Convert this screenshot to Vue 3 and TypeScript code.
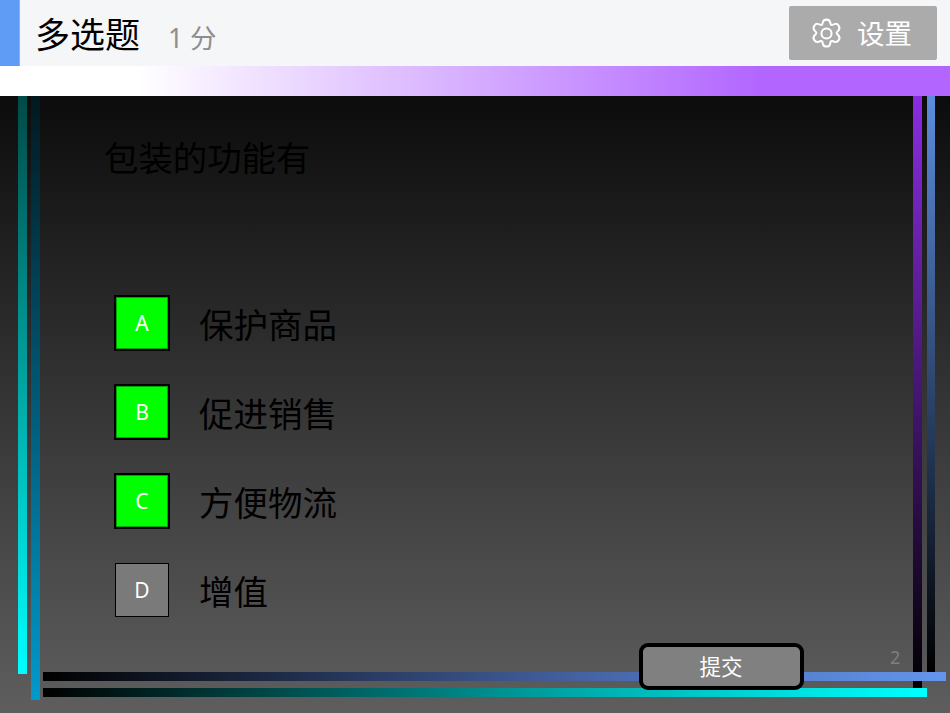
<script setup lang="ts">
interface Option { key: string; text: string; selected: boolean }
const options: Option[] = [
  { key: 'A', text: '保护商品', selected: true },
  { key: 'B', text: '促进销售', selected: true },
  { key: 'C', text: '方便物流', selected: true },
  { key: 'D', text: '增值', selected: false },
]
</script>

<template>
  <div class="page">
    <header class="header">
      <div class="accent"></div>
      <h1 class="title">多选题</h1>
      <span class="score">1 分</span>
      <button class="settings">
        <svg class="gear" viewBox="0 0 24 24" fill="none" stroke="currentColor" stroke-width="1.3" stroke-linecap="round" stroke-linejoin="round">
          <path d="M12 1.600c1.100 0 2 .4 2.300 1.500l.4 1.400c.1.400.6.600 1 .5l1.500-.5c1.100-.4 2.100.1 2.700 1.100.6 1 .7 2.100-.1 3l-1 1.100c-.3.300-.3.800 0 1.100l1 1.100c.8.900.8 2.100.1 3-.6 1-1.600 1.400-2.700 1.100l-1.500-.5c-.4-.1-.9.100-1 .5l-.4 1.500c-.3 1.100-1.200 1.600-2.300 1.600s-2-.5-2.300-1.600l-.4-1.500c-.1-.4-.6-.6-1-.5l-1.500.5c-1.100.3-2.100-.1-2.700-1.100-.7-.9-.7-2.100.1-3l1-1.100c.3-.3.3-.8 0-1.100l-1-1.100c-.8-.9-.7-2-.1-3 .6-1 1.600-1.500 2.700-1.100l1.500.5c.4.100.9-.1 1-.5l.4-1.400c.3-1.100 1.200-1.500 2.300-1.500z" transform="translate(0 1.400)"/>
          <circle cx="12" cy="12" r="3.300"/>
        </svg>
        <span class="settings-text">设置</span>
      </button>
    </header>
    <div class="ribbon"></div>
    <main class="stage">
      <i class="bar left-a"></i>
      <i class="bar left-b"></i>
      <i class="bar right-a"></i>
      <i class="bar right-b"></i>
      <i class="bar bottom-a"></i>
      <i class="bar bottom-b"></i>

      <h2 class="question">包装的功能有</h2>
      <ul class="options">
        <li v-for="o in options" :key="o.key" class="option">
          <span class="slot">
            <span class="letter" :class="{ on: o.selected }">{{ o.key }}</span>
          </span>
          <span class="label">{{ o.text }}</span>
        </li>
      </ul>
      <span class="page-no">2</span>
      <button class="submit">提交</button>
    </main>
  </div>
</template>

<style>
html, body { margin: 0; background: #5e5e5e; }
</style>

<style scoped>
.page {
  width: 950px;
  height: 713px;
  display: flex;
  flex-direction: column;
  overflow: hidden;
  font-family: "Noto Sans", "Noto Sans CJK SC", sans-serif;
}
.header {
  height: 66px;
  flex: none;
  display: flex;
  align-items: center;
  background: #f5f6f8;
}
.accent {
  width: 20px;
  height: 66px;
  background: #5f9cf6;
  border-right: 1px solid #7fb0f8;
  box-sizing: border-box;
}
.title {
  margin: 0 0 0 15px;
  font-size: 35px;
  font-weight: 400;
  line-height: 66px;
  color: #000;
  position: relative;
  top: 2px;
}
.score {
  margin-left: 28px;
  font-size: 26.500px;
  color: #8e8e8e;
  position: relative;
  top: 3px;
}
.settings {
  margin-left: auto;
  margin-right: 13px;
  width: 148px;
  height: 54px;
  border: 0;
  border-radius: 2px;
  background: #ababab;
  color: #fff;
  display: flex;
  align-items: center;
  padding: 0 0 0 19px;
  gap: 12px;
  font: inherit;
  font-size: 27.500px;
}
.settings-text {
  position: relative;
  top: -1px;
}
.gear {
  width: 37px;
  height: 37px;
  flex: none;
}
.ribbon {
  height: 30px;
  flex: none;
  background: linear-gradient(90deg, #fff 0, #fff 14.500%, #b266ff 80%, #b266ff 100%);
}
.stage {
  position: relative;
  flex: 1;
  background: linear-gradient(180deg, #0c0c0c 0%, #5e5e5e 100%);
  padding: 37px 0 0 104px;
  box-sizing: border-box;
}
.question {
  margin: 0;
  font-size: 34.400px;
  font-weight: 400;
  line-height: 50px;
  color: #000;
}
.options {
  list-style: none;
  margin: 112px 0 0;
  padding: 0;
  display: flex;
  flex-direction: column;
  gap: 33px;
}
.option {
  display: flex;
  align-items: center;
  height: 56px;
}
.slot {
  width: 56px;
  height: 56px;
  margin-left: 10px;
  display: flex;
  align-items: center;
  justify-content: center;
}
.letter {
  width: 54px;
  height: 54px;
  box-sizing: border-box;
  border: 1px solid #000;
  background: #7a7a7a;
  color: #fff;
  font-size: 21px;
  display: flex;
  align-items: center;
  justify-content: center;
}
.letter.on {
  width: 56px;
  height: 56px;
  border-width: 2px;
  box-shadow: inset 0 0 0 1px rgba(0, 0, 0, 0.35);
  background: #00ff00;
}
.label {
  margin-left: 29px;
  font-size: 34.500px;
  color: #000;
  line-height: 56px;
  position: relative;
  top: 2px;
}
.bar { position: absolute; display: block; }
.left-a { left: 18px; top: 0; width: 9px; height: 578px; background: linear-gradient(180deg, #024a46 0%, #00ffff 100%); }
.left-b { left: 31px; top: 0; width: 9px; height: 604px; background: linear-gradient(180deg, #02181f 0%, #0099cc 100%); }
.right-a { left: 913px; top: 0; width: 9px; height: 594px; background: linear-gradient(180deg, #8a2be2 0%, #000 100%); }
.right-b { left: 927px; top: 0; width: 8px; height: 576px; background: linear-gradient(180deg, #5c8ddc 0%, #000 100%); }
.bottom-a { left: 43px; top: 576px; width: 903px; height: 9px; background: linear-gradient(90deg, #000 0%, #4766a8 62%, #6495ed 100%); }
.bottom-b { left: 43px; top: 592px; width: 884px; height: 9px; background: linear-gradient(90deg, #000 0%, #00b0b0 63%, #00ffff 100%); }
.page-no {
  position: absolute;
  left: 890px;
  top: 548px;
  font-size: 18px;
  line-height: 26px;
  color: #7f7f7f;
}
.submit {
  position: absolute;
  left: 639px;
  top: 547px;
  width: 165px;
  height: 47px;
  box-sizing: border-box;
  border: 4px solid #000;
  border-radius: 9px;
  background: #808080;
  color: #fff;
  font: inherit;
  font-size: 21.500px;
  padding: 0 1px 3px 0;
}
</style>
